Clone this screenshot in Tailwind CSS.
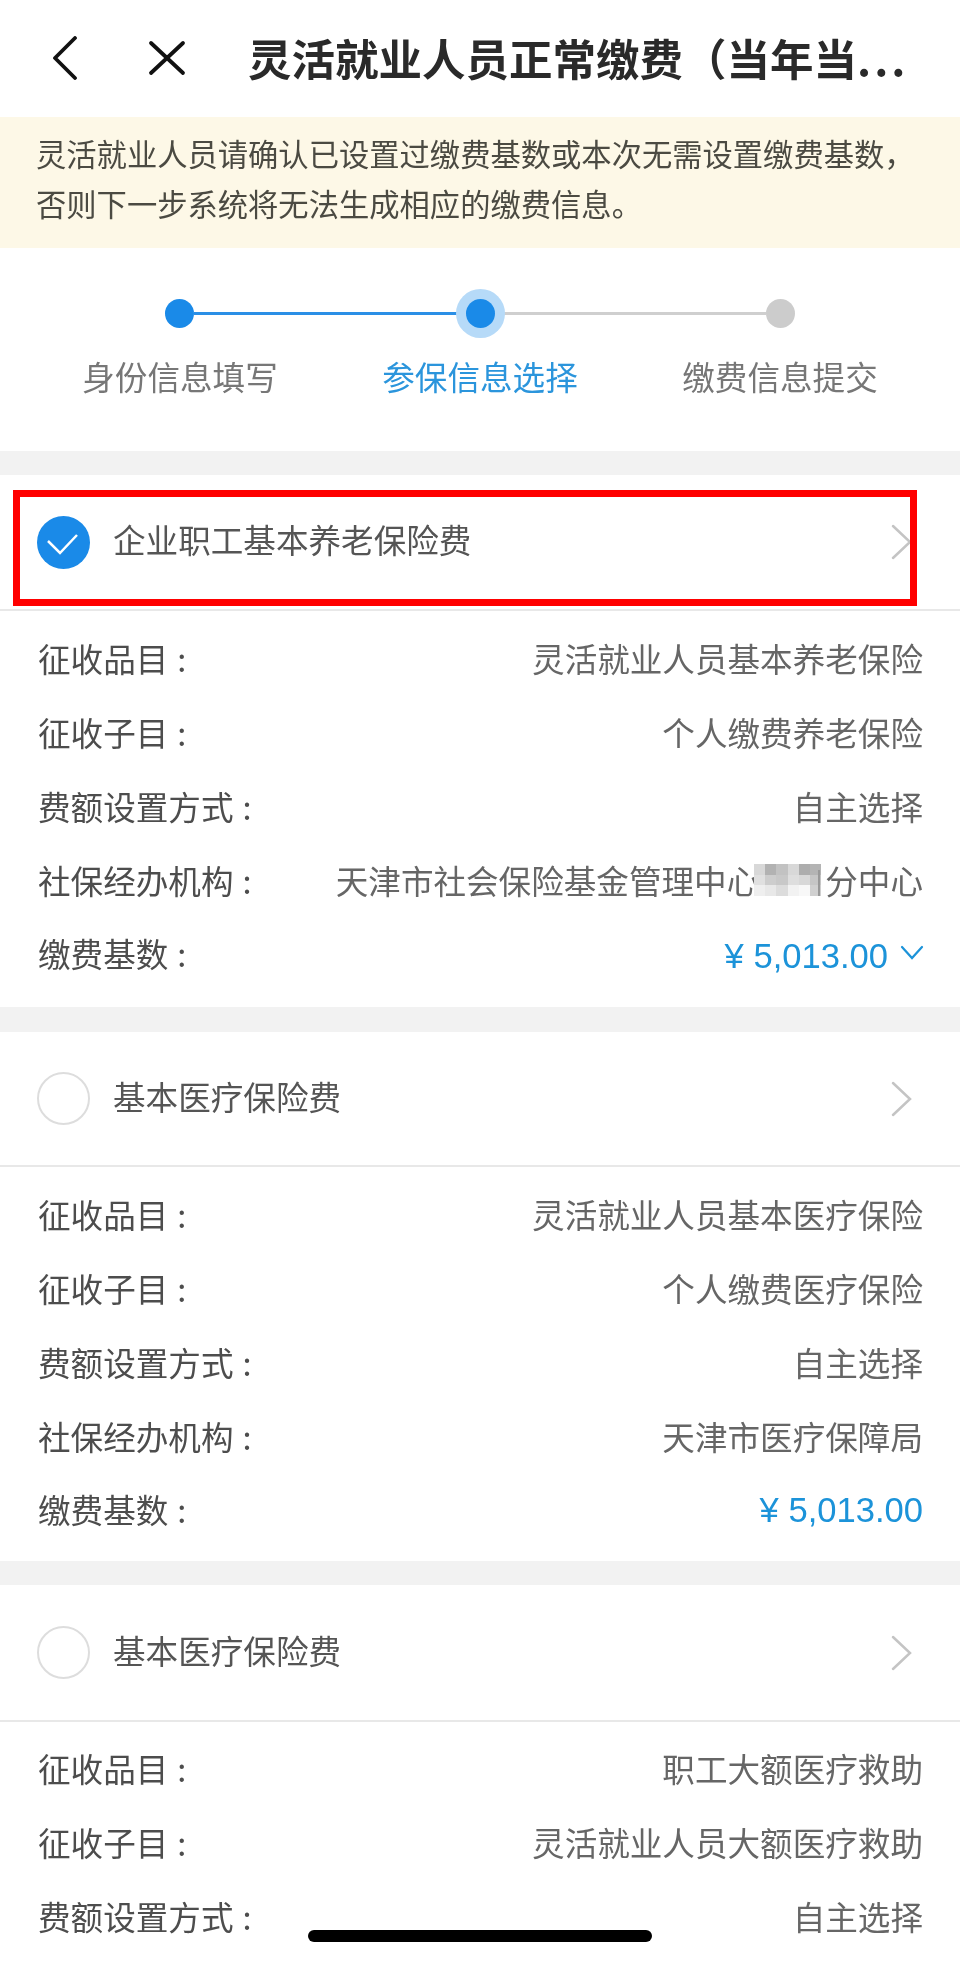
<!DOCTYPE html>
<html lang="zh-CN">
<head>
<meta charset="UTF-8">
<meta name="viewport" content="width=device-width, initial-scale=1.0">
<title>灵活就业人员正常缴费</title>
<script src="https://cdn.jsdelivr.net/npm/@tailwindcss/browser@4"></script>
</head>
<body class="bg-white">
<div class="relative w-[960px] h-[1961px] overflow-hidden bg-[#f2f2f2] blur-[0.4px] font-['Noto_Sans_CJK_SC',sans-serif] text-[32.6px] text-[#666666]">

  <!-- header -->
  <div class="h-[117px] bg-white flex items-center pb-[2px]">
    <svg class="ml-[50px] w-[28px] h-[44px]" viewBox="0 0 28 44" fill="none" stroke="#111111" stroke-width="3.8" stroke-linecap="round" stroke-linejoin="round"><path d="M25 2 L5 22 L25 42"/></svg>
    <svg class="ml-[70px] w-[38px] h-[36px]" viewBox="0 0 38 36" fill="none" stroke="#111111" stroke-width="3.8" stroke-linecap="round"><path d="M3 3 L35 33 M35 3 L3 33"/></svg>
    <div class="ml-[62px] text-[43.5px] font-bold leading-none text-[#2a2a2a] whitespace-nowrap">灵活就业人员正常缴费（当年当<span class="tracking-[3px]">...</span></div>
  </div>

  <!-- notice -->
  <div class="h-[131px] bg-[#fdf8e7] pl-[36px] pt-[12px] text-[30.3px] leading-[49.5px] text-[#4b4a42]">
    <p>灵活就业人员请确认已设置过缴费基数或本次无需设置缴费基数，</p>
    <p>否则下一步系统将无法生成相应的缴费信息。</p>
  </div>

  <!-- steps -->
  <div class="h-[203px] bg-white pt-[51px]">
    <div class="ml-[165px] w-[630px] h-[29px] flex items-center">
      <div class="w-[29px] h-[29px] rounded-full bg-[#1a8ae8]"></div>
      <div class="flex-1 h-[3px] bg-[#2a8fe6]"></div>
      <div class="relative z-10 w-[29px] h-[29px] rounded-full bg-[#1a8ae8] ring-[10px] ring-[#b6daf8]"></div>
      <div class="flex-1 h-[3px] bg-[#cfcfcf]"></div>
      <div class="w-[29px] h-[29px] rounded-full bg-[#cccccc]"></div>
    </div>
    <div class="mt-[24px] px-[30px] grid grid-cols-3 text-center leading-[48px]">
      <div class="text-[#777777]">身份信息填写</div>
      <div class="text-[#2b95dc]">参保信息选择</div>
      <div class="text-[#777777]">缴费信息提交</div>
    </div>
  </div>

  <!-- card 1 -->
  <section class="relative mt-[24px] h-[532px] bg-white">
    <div class="h-[136px] border-b-2 border-[#e8e8e8] flex items-center pl-[37px] pr-[48px]">
      <svg class="w-[53px] h-[53px]" viewBox="0 0 53 53" fill="none"><circle cx="26.5" cy="26.5" r="26.5" fill="#1a8ae8"/><path d="M11 25 L23 37 L40 19" stroke="#ffffff" stroke-width="2.5"/></svg>
      <span class="ml-[23px] flex-1 leading-[48px] mb-[6px] text-[#555555]">企业职工基本养老保险费</span>
      <svg class="w-[21px] h-[36px]" viewBox="0 0 21 36" fill="none" stroke="#c4c4c4" stroke-width="2.5" stroke-linecap="round"><path d="M2 2 L19 18 L2 34"/></svg>
    </div>
    <div class="pt-[11px] pl-[38px] pr-[37px]">
      <div class="h-[73.75px] flex items-center justify-between"><span class="text-[#4d4d4d]">征收品目<span class="ml-[9px]">:</span></span><span>灵活就业人员基本养老保险</span></div>
      <div class="h-[73.75px] flex items-center justify-between"><span class="text-[#4d4d4d]">征收子目<span class="ml-[9px]">:</span></span><span>个人缴费养老保险</span></div>
      <div class="h-[73.75px] flex items-center justify-between"><span class="text-[#4d4d4d]">费额设置方式<span class="ml-[9px]">:</span></span><span>自主选择</span></div>
      <div class="h-[73.75px] flex items-center justify-between"><span class="text-[#4d4d4d]">社保经办机构<span class="ml-[9px]">:</span></span>
        <span class="flex items-center">天津市社会保险基金管理中心
          <svg class="ml-[-5px] mr-[4px] w-[67px] h-[32px]" viewBox="0 0 60 30" preserveAspectRatio="none" shape-rendering="crispEdges">
            <rect width="60" height="30" fill="#eeeeee"/>
            <rect x="0" y="0" width="10" height="10" fill="#d8d8d8"/><rect x="10" y="0" width="10" height="10" fill="#b2b2b2"/><rect x="20" y="0" width="10" height="10" fill="#c2c2c2"/><rect x="30" y="0" width="10" height="10" fill="#d8d8d8"/><rect x="40" y="0" width="10" height="10" fill="#adadad"/><rect x="50" y="0" width="10" height="10" fill="#b4b4b4"/>
            <rect x="0" y="10" width="10" height="10" fill="#e0e0e0"/><rect x="10" y="10" width="10" height="10" fill="#cdcdcd"/><rect x="20" y="10" width="10" height="10" fill="#c8c8c8"/><rect x="30" y="10" width="10" height="10" fill="#dedede"/><rect x="40" y="10" width="10" height="10" fill="#d8d8d8"/><rect x="50" y="10" width="10" height="10" fill="#c6c6c6"/>
            <rect x="0" y="20" width="10" height="10" fill="#efefef"/><rect x="10" y="20" width="10" height="10" fill="#e8e8e8"/><rect x="20" y="20" width="10" height="10" fill="#dcdcdc"/><rect x="30" y="20" width="10" height="10" fill="#f2f2f2"/><rect x="40" y="20" width="10" height="10" fill="#f8f8f8"/><rect x="50" y="20" width="10" height="10" fill="#d0d0d0"/>
            <rect x="57" y="6" width="2" height="24" fill="#999999"/>
          </svg>分中心</span></div>
      <div class="h-[73.75px] flex items-center justify-between"><span class="text-[#4d4d4d]">缴费基数<span class="ml-[9px]">:</span></span>
        <span class="flex items-center mt-[6px] mr-[-1px] text-[#1c93d9]"><span class="font-['Liberation_Sans',sans-serif] text-[34.6px]">¥ 5,013.00</span><svg class="ml-[12px] w-[24px] h-[15px] mb-[8px]" viewBox="0 0 24 15" fill="none" stroke="#1c93d9" stroke-width="2.2" stroke-linecap="round"><path d="M2 2 L12 13 L22 2"/></svg></span></div>
    </div>
    <div class="absolute left-[13px] top-[15px] w-[904px] h-[116px] border-[7px] border-[#ff0000]"></div>
  </section>

  <!-- card 2 -->
  <section class="mt-[25px] h-[529px] bg-white">
    <div class="h-[135px] border-b-2 border-[#e8e8e8] flex items-center pl-[37px] pr-[48px]">
      <div class="w-[53px] h-[53px] rounded-full border-2 border-[#dddddd]"></div>
      <span class="ml-[23px] flex-1 leading-[48px] mb-[6px] text-[#555555]">基本医疗保险费</span>
      <svg class="w-[21px] h-[36px]" viewBox="0 0 21 36" fill="none" stroke="#c4c4c4" stroke-width="2.5" stroke-linecap="round"><path d="M2 2 L19 18 L2 34"/></svg>
    </div>
    <div class="pt-[11px] pl-[38px] pr-[37px]">
      <div class="h-[73.75px] flex items-center justify-between"><span class="text-[#4d4d4d]">征收品目<span class="ml-[9px]">:</span></span><span>灵活就业人员基本医疗保险</span></div>
      <div class="h-[73.75px] flex items-center justify-between"><span class="text-[#4d4d4d]">征收子目<span class="ml-[9px]">:</span></span><span>个人缴费医疗保险</span></div>
      <div class="h-[73.75px] flex items-center justify-between"><span class="text-[#4d4d4d]">费额设置方式<span class="ml-[9px]">:</span></span><span>自主选择</span></div>
      <div class="h-[73.75px] flex items-center justify-between"><span class="text-[#4d4d4d]">社保经办机构<span class="ml-[9px]">:</span></span><span>天津市医疗保障局</span></div>
      <div class="h-[73.75px] flex items-center justify-between"><span class="text-[#4d4d4d]">缴费基数<span class="ml-[9px]">:</span></span><span class="mt-[2px] font-['Liberation_Sans',sans-serif] text-[34.6px] text-[#1c93d9]">¥ 5,013.00</span></div>
    </div>
  </section>

  <!-- card 3 -->
  <section class="mt-[24px] h-[376px] bg-white">
    <div class="h-[137px] border-b-2 border-[#e8e8e8] flex items-center pl-[37px] pr-[48px]">
      <div class="w-[53px] h-[53px] rounded-full border-2 border-[#dddddd]"></div>
      <span class="ml-[23px] flex-1 leading-[48px] mb-[6px] text-[#555555]">基本医疗保险费</span>
      <svg class="w-[21px] h-[36px]" viewBox="0 0 21 36" fill="none" stroke="#c4c4c4" stroke-width="2.5" stroke-linecap="round"><path d="M2 2 L19 18 L2 34"/></svg>
    </div>
    <div class="pt-[10px] pl-[38px] pr-[37px]">
      <div class="h-[73.75px] flex items-center justify-between"><span class="text-[#4d4d4d]">征收品目<span class="ml-[9px]">:</span></span><span>职工大额医疗救助</span></div>
      <div class="h-[73.75px] flex items-center justify-between"><span class="text-[#4d4d4d]">征收子目<span class="ml-[9px]">:</span></span><span>灵活就业人员大额医疗救助</span></div>
      <div class="h-[73.75px] flex items-center justify-between"><span class="text-[#4d4d4d]">费额设置方式<span class="ml-[9px]">:</span></span><span>自主选择</span></div>
    </div>
  </section>

  <!-- home indicator -->
  <div class="absolute left-[308px] top-[1930px] w-[344px] h-[12px] rounded-full bg-black"></div>
</div>
</body>
</html>
